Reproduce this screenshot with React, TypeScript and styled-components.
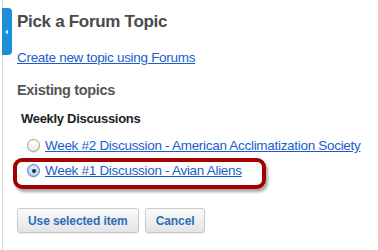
import * as React from 'react'
import styled, { createGlobalStyle } from 'styled-components'

const GlobalStyle = createGlobalStyle`
  html, body {
    margin: 0;
    padding: 0;
    background: #fff;
  }
  body {
    font-family: "Liberation Sans", Arial, sans-serif;
  }
`

const Page = styled.div`
  position: relative;
  display: flex;
  width: 378px;
  height: 250px;
  overflow: hidden;
  background: #fff;
`

const Rail = styled.div`
  width: 14px;
  margin-left: 2px;
  border-left: 1px solid #d9d9d9;
  padding-top: 8px;
`

const Tab = styled.div`
  width: 10px;
  height: 47px;
  margin-left: -1px;
  background: #1b8fd8;
  border-radius: 0 4px 4px 0;
  display: flex;
  align-items: center;
  justify-content: center;
`

const Arrow = styled.span`
  width: 0;
  height: 0;
  border-top: 2.5px solid transparent;
  border-bottom: 2.5px solid transparent;
  border-right: 3px solid #fff;
  margin-right: 1px;
`

const Content = styled.div`
  flex: 1;
  padding-top: 12px;
  display: flex;
  flex-direction: column;
  align-items: flex-start;
`

const Title = styled.h1`
  margin: 0;
  font-size: 17px;
  line-height: 20px;
  letter-spacing: -0.3px;
  font-weight: bold;
  color: #4a4a4a;
`

const Link = styled.a`
  color: #1b5ccc;
  text-decoration: underline;
  font-size: 13.5px;
  letter-spacing: -0.3px;
  cursor: pointer;
`

const CreateLink = styled(Link)`
  display: block;
  margin-top: 17px;
  line-height: 17px;
`

const SectionTitle = styled.h2`
  margin: 15px 0 0;
  font-size: 14.5px;
  line-height: 18px;
  letter-spacing: -0.35px;
  font-weight: bold;
  color: #555;
`

const GroupTitle = styled.h3`
  margin: 12px 0 0 4px;
  font-size: 13px;
  line-height: 16px;
  letter-spacing: -0.3px;
  font-weight: bold;
  color: #222;
`

const Options = styled.div`
  margin-top: 6px;
  display: flex;
  flex-direction: column;
`

const Option = styled.label`
  display: flex;
  align-items: center;
  height: 25px;
  padding-left: 10px;
  gap: 5px;
`

const Radio = styled.span<{ checked: boolean }>`
  box-sizing: border-box;
  width: 13px;
  height: 13px;
  border-radius: 50%;
  border: 1px solid ${p => (p.checked ? '#5a7fa8' : '#9a9a9a')};
  background: ${p =>
    p.checked
      ? 'radial-gradient(circle at 50% 40%, #e6f2fd 0%, #b4d3f3 70%, #8fb8e6 100%)'
      : 'linear-gradient(#ffffff, #ececec)'};
  box-shadow: 0 1px 1px rgba(0, 0, 0, 0.12);
  display: flex;
  align-items: center;
  justify-content: center;
  &::after {
    content: '';
    display: ${p => (p.checked ? 'block' : 'none')};
    width: 4px;
    height: 4px;
    border-radius: 50%;
    background: #1d2a3a;
  }
`

const Buttons = styled.div`
  margin-top: 25px;
  display: flex;
  gap: 6px;
`

const Button = styled.button`
  box-sizing: border-box;
  height: 25px;
  padding: 0 10px;
  border: 1px solid #c9c9c9;
  border-radius: 3px;
  background: linear-gradient(#fbfbfb, #e4e4e4);
  box-shadow: 0 1px 1px rgba(0, 0, 0, 0.08);
  font-family: "Liberation Sans", Arial, sans-serif;
  font-size: 12px;
  font-weight: bold;
  letter-spacing: -0.1px;
  color: #2e6cb5;
  cursor: pointer;
`

const Highlight = styled.div`
  position: absolute;
  left: 13px;
  top: 158px;
  width: 253px;
  height: 31px;
  box-sizing: border-box;
  border: 4px solid #a30000;
  border-radius: 9px;
  box-shadow: 2px 3px 3px rgba(0, 0, 0, 0.35);
  pointer-events: none;
`

const topics = [
  { id: 2, label: 'Week #2 Discussion - American Acclimatization Society' },
  { id: 1, label: 'Week #1 Discussion - Avian Aliens' },
]

const App: React.FC = () => {
  const [selected] = React.useState(1)

  return (
    <>
      <GlobalStyle />
      <Page>
        <Rail>
          <Tab>
            <Arrow />
          </Tab>
        </Rail>
        <Content>
          <Title>Pick a Forum Topic</Title>
          <CreateLink>Create new topic using Forums</CreateLink>
          <SectionTitle>Existing topics</SectionTitle>
          <GroupTitle>Weekly Discussions</GroupTitle>
          <Options>
            {topics.map(t => (
              <Option key={t.id}>
                <Radio checked={t.id === selected} />
                <Link>{t.label}</Link>
              </Option>
            ))}
          </Options>
          <Buttons>
            <Button>Use selected item</Button>
            <Button>Cancel</Button>
          </Buttons>
        </Content>
        <Highlight />
      </Page>
    </>
  )
}

export default App
